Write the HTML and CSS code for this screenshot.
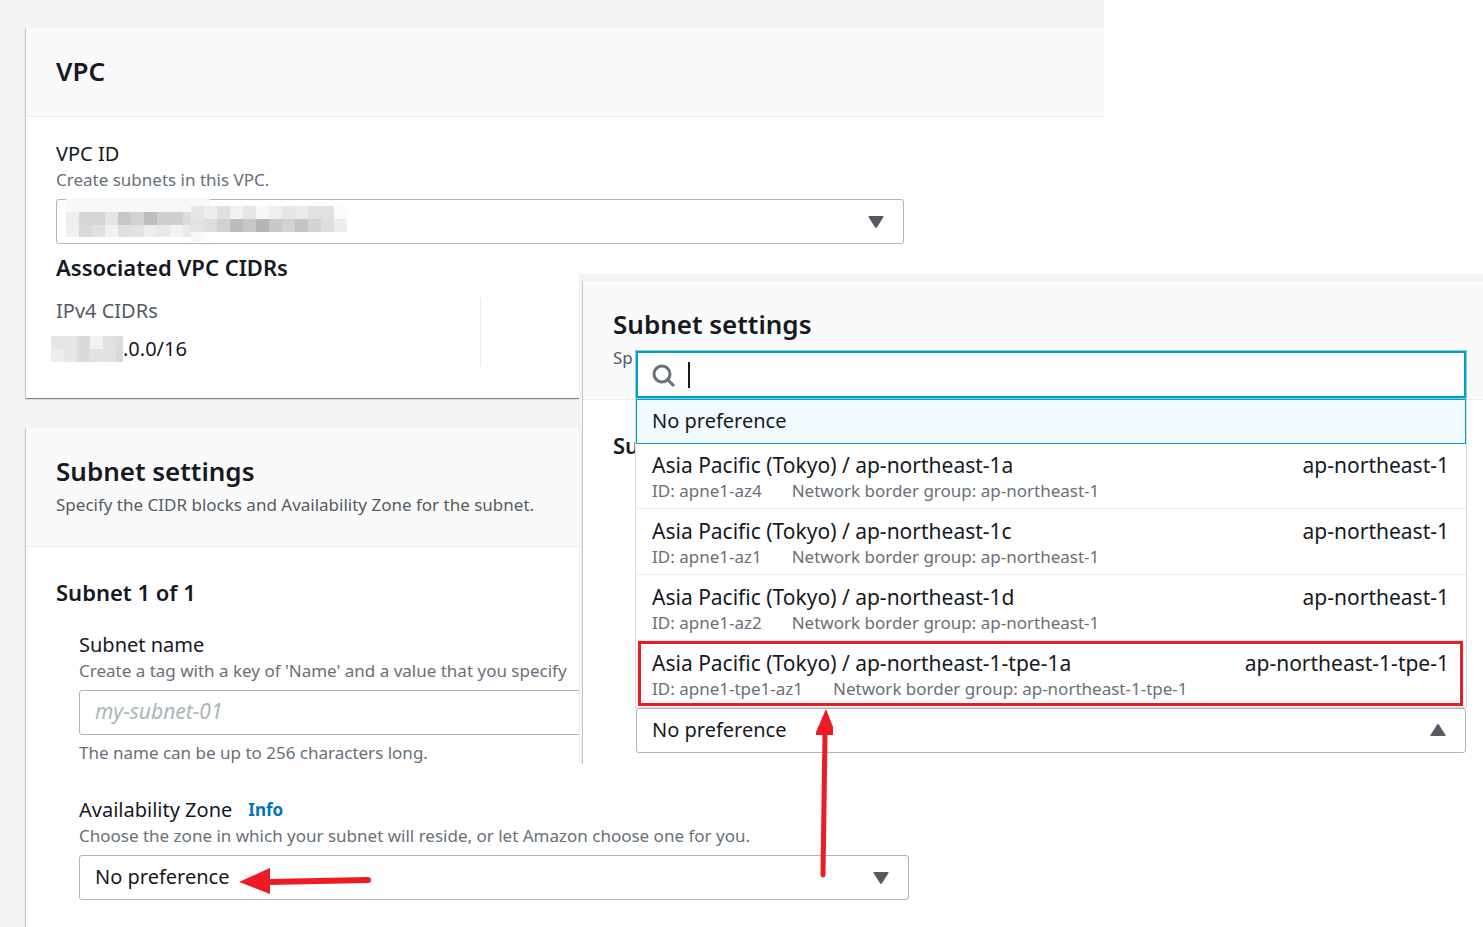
FILE: index.html
```html
<!DOCTYPE html>
<html lang="en">
<head>
    <meta charset="UTF-8">
    <meta name="viewport" content="width=device-width, initial-scale=1.0">
    <title>Create subnet</title>
    <link rel="stylesheet" href="styles.css">
</head>
<body>
    <main class="page">
        <section class="panel">
            <header class="panel-header">
                <h2>VPC</h2>
            </header>
            <div class="panel-body">
                <div class="field">
                    <label for="vpcId">VPC ID</label>
                    <p class="help">Create subnets in this VPC.</p>
                    <div class="select-box">
                        <select id="vpcId"><option></option></select>
                        <svg class="caret" viewBox="0 0 16 12" aria-hidden="true"><path d="M1 0h14q1 0 .5 1L9 11.300q-1 1.200-2 0L.5 1Q0 0 1 0z"/></svg>
                        <svg class="mosaic" viewBox="0 0 281 43" shape-rendering="crispEdges" aria-hidden="true">
                            <path fill="#f7f9f8" d="M0 0h144v13H0z"/>
                            <path fill="#eeeeee" d="M0 13h13v13H0z"/>
                            <path fill="#d6d6d6" d="M13 13h26v13H13z"/>
                            <path fill="#e4e6e4" d="M39 13h13v13H39z"/>
                            <path fill="#c6c7c9" d="M52 13h13v13H52z"/>
                            <path fill="#d1d2d4" d="M65 13h13v13H65z"/>
                            <path fill="#bdbec0" d="M78 13h13v13H78z"/>
                            <path fill="#cfcfcf" d="M91 13h26v13H91z"/>
                            <path fill="#dcdcdc" d="M117 13h8v13h-8z"/>
                            <path fill="#f1f1f1" d="M0 26h13v12H0z"/>
                            <path fill="#d9dadc" d="M13 26h13v12H13z"/>
                            <path fill="#e0e2e0" d="M26 26h13v12H26z"/>
                            <path fill="#f1f1f2" d="M39 26h13v12H39z"/>
                            <path fill="#e0e0e0" d="M52 26h13v12H52z"/>
                            <path fill="#e3e3e3" d="M65 26h13v12H65z"/>
                            <path fill="#ededed" d="M78 26h13v12H78z"/>
                            <path fill="#e8e8e8" d="M91 26h13v12H91z"/>
                            <path fill="#f3f3f3" d="M104 26h13v12h-13z"/>
                            <path fill="#e9ebea" d="M117 26h8v12h-8z"/>
                            <path fill="#e5e6e8" d="M125 7h13v13h-13z"/>
                            <path fill="#ecefee" d="M138 7h13v13h-13z"/>
                            <path fill="#e0e0e0" d="M151 7h13v13h-13z"/>
                            <path fill="#f1f1f1" d="M164 7h13v13h-13z"/>
                            <path fill="#e6e6e6" d="M177 7h13v13h-13z"/>
                            <path fill="#f6f8f7" d="M190 7h13v13h-13z"/>
                            <path fill="#efefef" d="M203 7h13v13h-13z"/>
                            <path fill="#e6e6e6" d="M216 7h13v13h-13z"/>
                            <path fill="#eaeaea" d="M229 7h13v13h-13z"/>
                            <path fill="#e1e1e1" d="M242 7h26v13h-26z"/>
                            <path fill="#fbfbfb" d="M268 7h13v13h-13z"/>
                            <path fill="#e2e3e3" d="M125 20h13v13h-13z"/>
                            <path fill="#dcdfde" d="M138 20h13v13h-13z"/>
                            <path fill="#d1d1d1" d="M151 20h13v13h-13z"/>
                            <path fill="#bbbcbe" d="M164 20h13v13h-13z"/>
                            <path fill="#c6c7c9" d="M177 20h13v13h-13z"/>
                            <path fill="#b4b5b5" d="M190 20h13v13h-13z"/>
                            <path fill="#c7c8c8" d="M203 20h13v13h-13z"/>
                            <path fill="#d1d2d4" d="M216 20h13v13h-13z"/>
                            <path fill="#c4c4c6" d="M229 20h13v13h-13z"/>
                            <path fill="#d3d4d6" d="M242 20h13v13h-13z"/>
                            <path fill="#dedede" d="M255 20h13v13h-13z"/>
                            <path fill="#ebeeec" d="M268 20h13v13h-13z"/>
                            <path fill="#f8f8f8" d="M125 33h13v10h-13z"/>
                            <path fill="#fdfdfd" d="M138 33h13v10h-13z"/>
                        </svg>
                    </div>
                </div>
                <h3 class="cidr-title">Associated VPC CIDRs</h3>
                <div class="cidr-columns">
                    <div class="cidr-column">
                        <p class="cidr-label">IPv4 CIDRs</p>
                        <p class="cidr-value">
                            <svg class="mask" viewBox="0 0 72 26" shape-rendering="crispEdges" aria-hidden="true">
                                <path fill="#e5e5e5" d="M0 0h13v13H0z"/>
                                <path fill="#e7e7e7" d="M13 0h13v26H13z"/>
                                <path fill="#dadcdb" d="M26 0h13v26H26z"/>
                                <path fill="#f2f2f2" d="M39 0h13v13H39z"/>
                                <path fill="#e0e1e1" d="M52 0h13v26H52z"/>
                                <path fill="#dcdedd" d="M65 0h7v13h-7z"/>
                                <path fill="#eeeeee" d="M0 13h13v13H0z"/>
                                <path fill="#e2e2e2" d="M39 13h13v13H39z"/>
                                <path fill="#d8d9db" d="M65 13h7v13h-7z"/>
                            </svg>
                            <span>.0.0/16</span>
                        </p>
                    </div>
                </div>
            </div>
        </section>

        <section class="panel panel-last">
            <header class="panel-header">
                <h2>Subnet settings</h2>
                <p class="description">Specify the CIDR blocks and Availability Zone for the subnet.</p>
            </header>
            <div class="panel-body">
                <h3 class="subnet-title">Subnet 1 of 1</h3>
                <div class="subnet-fields">
                    <div class="field">
                        <label for="subnetName">Subnet name</label>
                        <p class="help">Create a tag with a key of 'Name' and a value that you specify</p>
                        <input type="text" id="subnetName" class="text-input" placeholder="my-subnet-01">
                        <p class="hint">The name can be up to 256 characters long.</p>
                    </div>
                    <div class="field">
                        <div class="label-row">
                            <label for="zone">Availability Zone</label>
                            <a href="#" class="info">Info</a>
                        </div>
                        <p class="help">Choose the zone in which your subnet will reside, or let Amazon choose one for you.</p>
                        <div class="select-box">
                            <select id="zone"><option>No preference</option></select>
                            <svg class="caret" viewBox="0 0 16 12" aria-hidden="true"><path d="M1 0h14q1 0 .5 1L9 11.300q-1 1.200-2 0L.5 1Q0 0 1 0z"/></svg>
                            <svg class="arrow-left" viewBox="0 0 134 28" aria-hidden="true">
                                <path d="M0 14L31 0v26z"/>
                                <path class="stroke" d="M30 14L129 12"/>
                            </svg>
                        </div>
                    </div>
                </div>
            </div>
        </section>
    </main>

    <aside class="inset">
        <section class="panel">
            <header class="panel-header">
                <h2>Subnet settings</h2>
                <p class="description">Sp</p>
            </header>
            <div class="panel-body">
                <h3 class="subnet-title">Su</h3>
                <div class="zone-picker">
                    <div class="dropdown">
                        <div class="search">
                            <svg class="search-icon" viewBox="0 0 24 24" aria-hidden="true">
                                <circle cx="10" cy="11" r="8"/>
                                <path d="M15.500 16.500L22 23"/>
                            </svg>
                            <span class="cursor"></span>
                            <input type="text" class="search-input" aria-label="Search zones">
                        </div>
                        <ul class="options" role="listbox" aria-label="Availability Zone">
                            <li class="option selected" role="option" aria-selected="true">No preference</li>
                            <li class="option" role="option">
                                <div class="option-main"><span>Asia Pacific (Tokyo) / ap-northeast-1a</span><span>ap-northeast-1</span></div>
                                <div class="option-tags"><span>ID: apne1-az4</span><span>Network border group: ap-northeast-1</span></div>
                            </li>
                            <li class="option" role="option">
                                <div class="option-main"><span>Asia Pacific (Tokyo) / ap-northeast-1c</span><span>ap-northeast-1</span></div>
                                <div class="option-tags"><span>ID: apne1-az1</span><span>Network border group: ap-northeast-1</span></div>
                            </li>
                            <li class="option" role="option">
                                <div class="option-main"><span>Asia Pacific (Tokyo) / ap-northeast-1d</span><span>ap-northeast-1</span></div>
                                <div class="option-tags"><span>ID: apne1-az2</span><span>Network border group: ap-northeast-1</span></div>
                            </li>
                            <li class="option marked" role="option">
                                <div class="option-main"><span>Asia Pacific (Tokyo) / ap-northeast-1-tpe-1a</span><span>ap-northeast-1-tpe-1</span></div>
                                <div class="option-tags"><span>ID: apne1-tpe1-az1</span><span>Network border group: ap-northeast-1-tpe-1</span></div>
                            </li>
                        </ul>
                    </div>
                    <button type="button" class="trigger" aria-expanded="true">No preference</button>
                    <svg class="caret caret-up" viewBox="0 0 16 12" aria-hidden="true"><path d="M1 0h14q1 0 .5 1L9 11.300q-1 1.200-2 0L.5 1Q0 0 1 0z"/></svg>
                    <svg class="arrow-up" viewBox="0 0 20 172" aria-hidden="true">
                        <path d="M11 1L18 19V27L1 27V24z"/>
                        <path class="stroke thin" d="M10 26L8 167"/>
                    </svg>
                </div>
            </div>
        </section>
    </aside>
</body>
</html>
```
FILE: styles.css
```css
:root {
    --text: #16191f;
    --text-muted: #687078;
    --text-label: #545b64;
    --border: #aab7b8;
    --divider: #eaeded;
    --page-bg: #f2f4f3;
    --focus: #00a1c9;
    --mark: #ed1c24;
}

* {
    margin: 0;
    padding: 0;
    box-sizing: border-box;
}

body {
    position: relative;
    font-family: 'Noto Sans', 'Open Sans', sans-serif;
    font-size: 20px;
    line-height: 26px;
    color: var(--text);
    background: #fff;
}

.page {
    display: flex;
    flex-direction: column;
    gap: 30px;
    width: calc(100% - 379px);
    height: 100vh;
    min-height: 927px;
    padding: 28px 0 0 26px;
    overflow: hidden;
    background: var(--page-bg);
}

/* Panels */
.panel {
    background: #fff;
    box-shadow: 0 1px 1px 0 rgba(0, 28, 36, 0.4), -1px 1px 1px 0 rgba(0, 28, 36, 0.15);
}

.panel-last {
    flex: 1;
}

.panel-header {
    padding: 28px 30px 30px;
    background: #fafafa;
    border-bottom: 1px solid var(--divider);
}

.panel-body {
    padding: 24px 30px 32px;
}

h2 {
    font-size: 26px;
    line-height: 30px;
    font-weight: 600;
}

h3 {
    font-size: 22px;
    line-height: 26px;
    font-weight: 600;
}

.description,
.help,
.hint {
    font-size: 17px;
    line-height: 22px;
    color: var(--text-muted);
    white-space: nowrap;
}

.description {
    margin-top: 8px;
    color: var(--text-label);
}

.help {
    margin: 2px 0 8px;
}

.hint {
    margin-top: 7px;
}

/* Form fields */
.field {
    max-width: 848px;
}

.field label {
    display: block;
}

.label-row {
    display: flex;
    align-items: center;
    gap: 16px;
}

.info {
    font-size: 17px;
    font-weight: 700;
    color: #0073bb;
    text-decoration: none;
}

.select-box {
    position: relative;
}

select,
.text-input,
.trigger {
    display: block;
    width: 100%;
    height: 45px;
    padding: 0 15px 2px;
    font: inherit;
    text-align: left;
    color: var(--text);
    background: #fff;
    border: 1px solid var(--border);
    border-radius: 3px;
    appearance: none;
}

.text-input::placeholder {
    font-size: 21px;
    color: #aab7b8;
    font-style: italic;
    opacity: 1;
}

.caret {
    position: absolute;
    top: 17px;
    right: 20px;
    width: 16px;
    height: 12px;
    fill: #545b64;
}

.caret-up {
    top: 16px;
    transform: rotate(180deg);
}

.mosaic {
    position: absolute;
    top: 0;
    left: 10px;
    width: 281px;
    height: 43px;
}

/* CIDR list */
.cidr-title {
    margin: 10px 0 18px;
}

.cidr-columns {
    display: grid;
    grid-template-columns: 1fr 1fr;
    max-width: 850px;
}

.cidr-column {
    height: 68px;
    border-right: 1px solid var(--divider);
}

.cidr-label {
    margin-bottom: 12px;
    color: var(--text-label);
}

.cidr-value {
    display: flex;
}

.mask {
    width: 72px;
    height: 26px;
    margin-left: -5px;
}

/* Subnet form */
.subnet-title {
    margin-top: 8px;
}

.subnet-fields {
    display: flex;
    flex-direction: column;
    gap: 33px;
    max-width: 853px;
    margin-top: 27px;
    padding-left: 23px;
}

/* Second view, laid over the page */
.inset {
    position: absolute;
    top: 274px;
    left: 579px;
    right: 0;
    padding: 7px 0 0 4px;
    background: var(--page-bg);
}

.inset .panel {
    box-shadow: -1px 0 0 0 #c3c9ca;
}

.inset .panel-body {
    padding: 24px 17px 11px 30px;
}

.zone-picker {
    position: relative;
    margin: 250px 0 0 23px;
}

.dropdown {
    position: absolute;
    left: 0;
    right: 0;
    bottom: 46px;
    background: #fff;
    box-shadow: 0 0 0 1px #d5dbdb;
}

.search {
    display: flex;
    align-items: center;
    height: 47px;
    margin-bottom: 1px;
    padding: 0 14px;
    background: #fff;
    border: 2px solid var(--focus);
    box-shadow: 0 0 0 1px #7fcfe3;
}

.search-icon {
    width: 24px;
    height: 24px;
    fill: none;
    stroke: #687078;
    stroke-width: 3;
}

.cursor {
    width: 2px;
    height: 26px;
    margin-left: 12px;
    background: var(--text);
}

.search-input {
    flex: 1;
    min-width: 0;
    height: 40px;
    font: inherit;
    background: transparent;
    border: 0;
    outline: none;
}

.options {
    list-style: none;
}

.option {
    position: relative;
    padding: 9px 17px 6px 16px;
    border-bottom: 1px solid var(--divider);
}

.option.selected {
    margin-bottom: -1px;
    padding: 8px 15px 9px;
    background: #f1faff;
    border: 1px solid var(--focus);
    z-index: 1;
}

.option-main {
    display: flex;
    justify-content: space-between;
    gap: 20px;
    font-size: 21px;
}

.option-tags {
    display: flex;
    gap: 30px;
    margin-top: 2px;
    font-size: 17px;
    line-height: 22px;
    color: var(--text-muted);
}

.option.marked {
    border-bottom-color: transparent;
}

/* Red annotations */
.option.marked::after {
    content: "";
    position: absolute;
    inset: 0 3px 0 2px;
    border: 3px solid var(--mark);
}

.arrow-left,
.arrow-up {
    position: absolute;
    fill: var(--mark);
}

.arrow-left {
    top: 13px;
    left: 160px;
    width: 134px;
    height: 28px;
}

.arrow-up {
    top: 0;
    left: 179px;
    width: 20px;
    height: 172px;
}

.stroke {
    fill: none;
    stroke: var(--mark);
    stroke-width: 6;
    stroke-linecap: round;
}

.stroke.thin {
    stroke-width: 5;
}
```
